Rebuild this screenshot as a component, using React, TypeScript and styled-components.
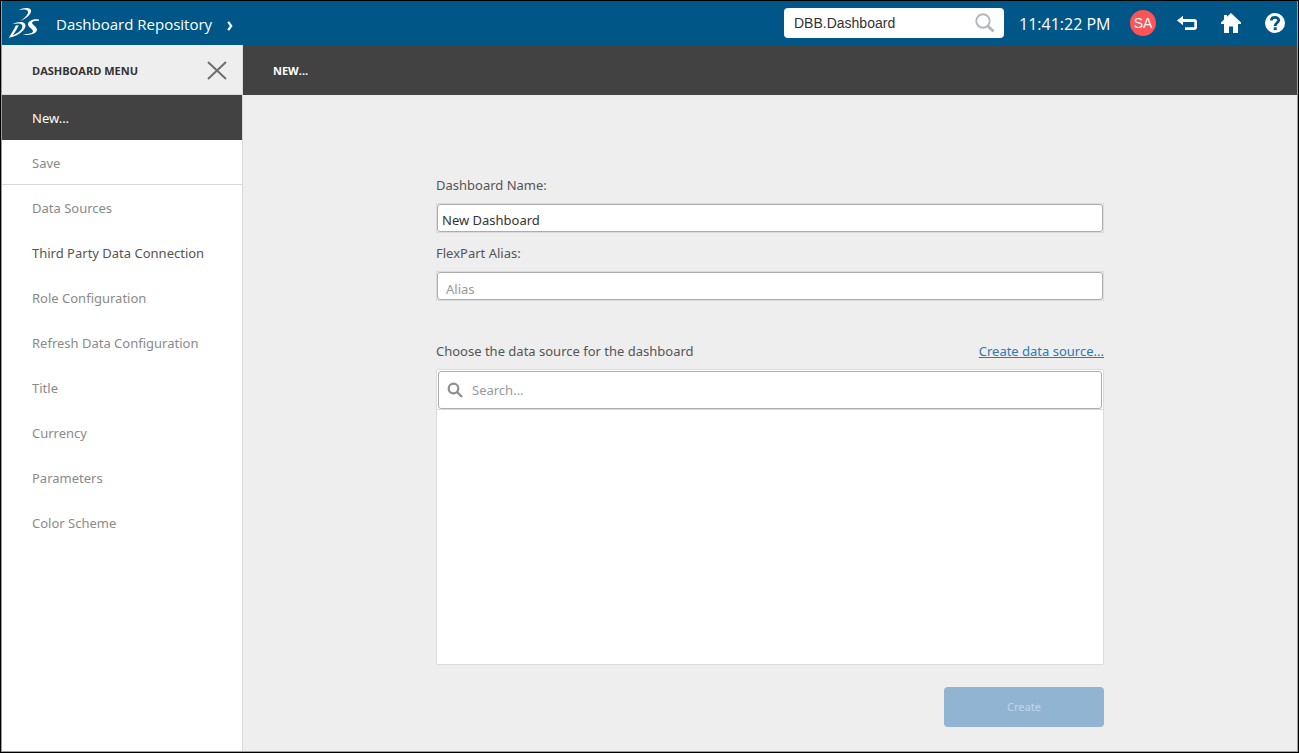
import React, { useState } from "react";
import styled, { createGlobalStyle } from "styled-components";

const GlobalStyle = createGlobalStyle`
  * { box-sizing: border-box; }
  html, body { margin: 0; padding: 0; }
  body {
    font-family: "Noto Sans", "Open Sans", sans-serif;
    font-size: 13px;
    line-height: 20px;
    color: #555;
    background: #eeeeee;
  }
  button, input { font-family: inherit; font-size: inherit; }
`;

const Frame = styled.div`
  min-height: 100vh;
  display: flex;
  flex-direction: column;
  border: 1px solid #000;
`;

const Window = styled.div`
  flex: 1;
  display: flex;
  flex-direction: column;
  border: solid #6fa8dc;
  border-width: 0 1px 1px;
`;

const TopBar = styled.header`
  height: 44px;
  display: flex;
  align-items: center;
  background: #005686;
  color: #fff;
  padding: 0 12px 0 6px;
`;

const Logo = styled.svg`
  width: 32px;
  height: 32px;
  flex: none;
`;

const AppTitle = styled.h1`
  margin: 0 0 0 16px;
  padding-top: 2px;
  font: 400 15px/20px "Open Sans", sans-serif;
  white-space: nowrap;
`;

const Chevron = styled.svg`
  width: 8px;
  height: 12px;
  margin: 6px 0 0 14px;
`;

const SearchBox = styled.label`
  width: 220px;
  height: 30px;
  margin-left: auto;
  display: flex;
  align-items: center;
  padding: 0 9px 0 10px;
  background: #fff;
  border-radius: 4px;
`;

const SearchInput = styled.input`
  flex: 1;
  min-width: 0;
  padding: 0;
  border: 0;
  outline: 0;
  background: none;
  color: #333;
  font: 14px/20px "Liberation Sans", Arial, sans-serif;
`;

const Clock = styled.time`
  width: 96px;
  margin: 2px 15px 0;
  font: 400 16px/20px "Open Sans", sans-serif;
  white-space: nowrap;
`;

const Avatar = styled.button`
  width: 26px;
  height: 26px;
  padding: 0;
  border: 0;
  border-radius: 50%;
  background: #fc5455;
  color: #fff;
  font: 14px/26px "Liberation Sans", Arial, sans-serif;
  text-align: center;
`;

const BarActions = styled.nav`
  display: flex;
  gap: 24px;
  margin-left: 21px;
`;

const IconButton = styled.button<{ $size: number }>`
  width: ${(p) => p.$size}px;
  height: ${(p) => p.$size}px;
  display: flex;
  padding: 0;
  border: 0;
  background: none;
  color: inherit;
  cursor: pointer;
  svg { width: 100%; height: 100%; }
`;

const Body = styled.div`
  flex: 1;
  display: flex;
`;

const Sidebar = styled.aside`
  width: 241px;
  flex: none;
  background: #fff;
  border-right: 1px solid #d9d9d9;
`;

const SidebarHeader = styled.div`
  height: 50px;
  display: flex;
  align-items: center;
  justify-content: space-between;
  padding: 2px 15px 0 30px;
  background: #eeeeee;
  border-bottom: 1px solid #d9d9d9;
`;

const Heading = styled.h2`
  margin: 0;
  font: 700 11px/20px "Open Sans", sans-serif;
  text-transform: uppercase;
  color: inherit;
`;

const MenuHeading = styled(Heading)`
  color: #333;
`;

const MenuList = styled.ul`
  margin: 0;
  padding: 0;
  list-style: none;
`;

type MenuState = "active" | "enabled" | "muted";
const menuColors: Record<MenuState, string> = {
  active: "#fff",
  enabled: "#555",
  muted: "#8a8a8a",
};

const MenuItem = styled.button<{ $state: MenuState; $divider?: boolean }>`
  width: 100%;
  height: 45px;
  display: block;
  padding: 2px 30px 0;
  border: 0;
  border-bottom: 1px solid ${(p) => (p.$divider ? "#d9d9d9" : "transparent")};
  background: ${(p) => (p.$state === "active" ? "#424242" : "#fff")};
  color: ${(p) => menuColors[p.$state]};
  text-align: left;
  white-space: nowrap;
`;

const Main = styled.main`
  flex: 1;
  min-width: 0;
`;

const MainHeader = styled.div`
  height: 50px;
  display: flex;
  align-items: center;
  padding: 2px 30px 0;
  background: #424242;
  color: #fff;
`;

const Form = styled.form`
  max-width: 668px;
  margin: 0 auto;
  padding: 80px 0 24px;
  display: flex;
  flex-direction: column;
`;

const Field = styled.div`
  display: flex;
  flex-direction: column;
  gap: 8px;
  margin-bottom: 10px;
`;

const InputShell = styled.div`
  border: 1px solid #dcdcdc;
  display: flex;
`;

const TextInput = styled.input<{ $inset: number }>`
  flex: 1;
  min-width: 0;
  height: 28px;
  padding: ${(p) => p.$inset / 2 + 1}px ${(p) => p.$inset}px 0;
  border: 1px solid #adadad;
  border-radius: 3px;
  background: #fff;
  color: #333;
  outline: 0;
  &::placeholder { color: #999; opacity: 1; }
`;

const SourceHeader = styled.div`
  display: flex;
  justify-content: space-between;
  margin: 30px 0 8px;
`;

const SourceLink = styled.a`
  color: #3079b5;
  text-decoration: underline;
`;

const SourcePanel = styled.section`
  height: 296px;
  background: #fff;
  border: 1px solid #dcdcdc;
  border-radius: 2px;
`;

const SourceSearchRow = styled.div`
  padding: 1px 1px 0;
  border-bottom: 1px solid #dcdcdc;
`;

const SourceSearch = styled.label`
  height: 38px;
  display: flex;
  align-items: center;
  gap: 9px;
  padding: 0 8px;
  border: 1px solid #adadad;
  border-radius: 3px;
  color: #8f8f8f;
  svg { width: 16px; height: 16px; flex: none; }
`;

const SourceSearchInput = styled.input`
  flex: 1;
  min-width: 0;
  padding: 0;
  border: 0;
  outline: 0;
  color: #333;
  &::placeholder { color: #999; opacity: 1; }
`;

const CreateButton = styled.button`
  width: 160px;
  height: 40px;
  margin-top: 22px;
  padding: 0 0 2px;
  align-self: flex-end;
  border: 0;
  border-radius: 4px;
  background: #92b4d3;
  color: #c3d6e7;
  font-size: 11px;
`;

const menu: { label: string; state: MenuState; divider?: boolean }[] = [
  { label: "New...", state: "active" },
  { label: "Save", state: "muted", divider: true },
  { label: "Data Sources", state: "muted" },
  { label: "Third Party Data Connection", state: "enabled" },
  { label: "Role Configuration", state: "muted" },
  { label: "Refresh Data Configuration", state: "muted" },
  { label: "Title", state: "muted" },
  { label: "Currency", state: "muted" },
  { label: "Parameters", state: "muted" },
  { label: "Color Scheme", state: "muted" },
];

export default function App() {
  const [query, setQuery] = useState("DBB.Dashboard");
  const [name, setName] = useState("New Dashboard");

  return (
    <Frame>
      <GlobalStyle />
      <Window>
        <TopBar>
          <Logo viewBox="0 0 32 32" fill="#fff" aria-hidden="true">
            <path d="M10.500 3.200C14 1.200 18 .6 20.500 1.300C24.500 2.500 23.500 6.200 20 9.200C17.800 11.200 15 13 12 14.300C15.500 11.800 18.500 9.200 19.800 6.500C21 3.800 18.500 2.600 15.500 2.600C13.800 2.600 12 2.900 10.500 3.200Z" />
            <path fillRule="evenodd" d="M4.500 17C8 15.300 12.500 14.500 15.300 15.500C18.800 17 17.800 20.800 14.800 23.800C11.500 27.200 6.500 29.800 .8 30.800C3.500 26.800 5.500 22.800 7.800 18.500L10.800 18.200C9.200 21.500 7 25.300 4.600 28.300C8.500 27 12.500 24.300 13.900 21.500C15.500 18.200 13.300 16.600 10 16.500C8 16.500 6.300 16.700 4.500 17Z" />
            <path d="M31 13.800C27.500 13.500 24 14.200 24 15.800C24.200 17.800 29 20 29 22.800C29 26.800 20.500 29.300 14.500 27.300C19.500 27.300 24.800 26.500 25 24.300C25 22 20 20.200 20 17.300C20 13.500 26.500 11.300 31 12.500Z" />
          </Logo>
          <AppTitle>Dashboard Repository</AppTitle>
          <Chevron viewBox="0 0 8 12" fill="none" stroke="#fff" strokeWidth="2.200" aria-hidden="true">
            <path d="M2.200 1.800L5.200 6L2.200 10.200" />
          </Chevron>
          <SearchBox>
            <SearchInput aria-label="Search" value={query} onChange={(e) => setQuery(e.target.value)} />
            <svg width="20" height="20" viewBox="0 0 20 20" fill="none" stroke="#b4b7bb" aria-hidden="true">
              <circle cx="8" cy="8" r="6.700" strokeWidth="1.900" />
              <path d="M12.800 13L18.600 18.500" strokeWidth="3" />
            </svg>
          </SearchBox>
          <Clock>11:41:22 PM</Clock>
          <Avatar type="button">SA</Avatar>
          <BarActions>
            <IconButton $size={20} type="button" aria-label="Back">
              <svg viewBox="0 0 20 20" aria-hidden="true">
                <path d="M0 7.500L6 2.800V12.200Z" fill="#fff" />
                <path d="M5 7.500H17.200Q18.700 7.500 18.700 9V14Q18.700 15.700 17 15.700H8" fill="none" stroke="#fff" strokeWidth="2.800" />
              </svg>
            </IconButton>
            <IconButton $size={20} type="button" aria-label="Home">
              <svg viewBox="0 0 20 20" fill="#fff" aria-hidden="true">
                <path d="M10 0L20 9.500V11H17V20H12V13.500H8V20H3V11H0V9.500L3 6.500V2H6V3.800Z" />
              </svg>
            </IconButton>
            <IconButton $size={20} type="button" aria-label="Help">
              <svg viewBox="0 0 20 20" aria-hidden="true">
                <circle cx="10" cy="10" r="10" fill="#fff" />
                <path d="M6.300 7.500C6.300 3.500 13.700 3.500 13.700 7.300C13.700 9.800 10.200 9.800 10.200 13" fill="none" stroke="#005686" strokeWidth="2.800" />
                <rect x="8.800" y="14.300" width="2.900" height="2.800" fill="#005686" />
              </svg>
            </IconButton>
          </BarActions>
        </TopBar>
        <Body>
          <Sidebar>
            <SidebarHeader>
              <MenuHeading>Dashboard Menu</MenuHeading>
              <IconButton $size={20} type="button" aria-label="Close menu">
                <svg viewBox="0 0 20 20" fill="none" stroke="#6e6e6e" strokeWidth="2" aria-hidden="true">
                  <path d="M1 1L19 18M19 1L1 18" />
                </svg>
              </IconButton>
            </SidebarHeader>
            <MenuList>
              {menu.map((item) => (
                <li key={item.label}>
                  <MenuItem type="button" $state={item.state} $divider={item.divider}>
                    {item.label}
                  </MenuItem>
                </li>
              ))}
            </MenuList>
          </Sidebar>
          <Main>
            <MainHeader>
              <Heading>New...</Heading>
            </MainHeader>
            <Form onSubmit={(e) => e.preventDefault()}>
              <Field>
                <label htmlFor="dashboard-name">Dashboard Name:</label>
                <InputShell>
                  <TextInput id="dashboard-name" $inset={4} value={name} onChange={(e) => setName(e.target.value)} />
                </InputShell>
              </Field>
              <Field>
                <label htmlFor="alias">FlexPart Alias:</label>
                <InputShell>
                  <TextInput id="alias" $inset={8} placeholder="Alias" />
                </InputShell>
              </Field>
              <SourceHeader>
                <span>Choose the data source for the dashboard</span>
                <SourceLink href="#create">Create data source...</SourceLink>
              </SourceHeader>
              <SourcePanel>
                <SourceSearchRow>
                  <SourceSearch>
                    <svg viewBox="0 0 16 16" fill="none" stroke="currentColor" aria-hidden="true">
                      <circle cx="6.500" cy="6.500" r="4.800" strokeWidth="2.200" />
                      <path d="M10 10L15 15" strokeWidth="2.400" />
                    </svg>
                    <SourceSearchInput aria-label="Search data sources" placeholder="Search..." />
                  </SourceSearch>
                </SourceSearchRow>
              </SourcePanel>
              <CreateButton type="submit" disabled>
                Create
              </CreateButton>
            </Form>
          </Main>
        </Body>
      </Window>
    </Frame>
  );
}
